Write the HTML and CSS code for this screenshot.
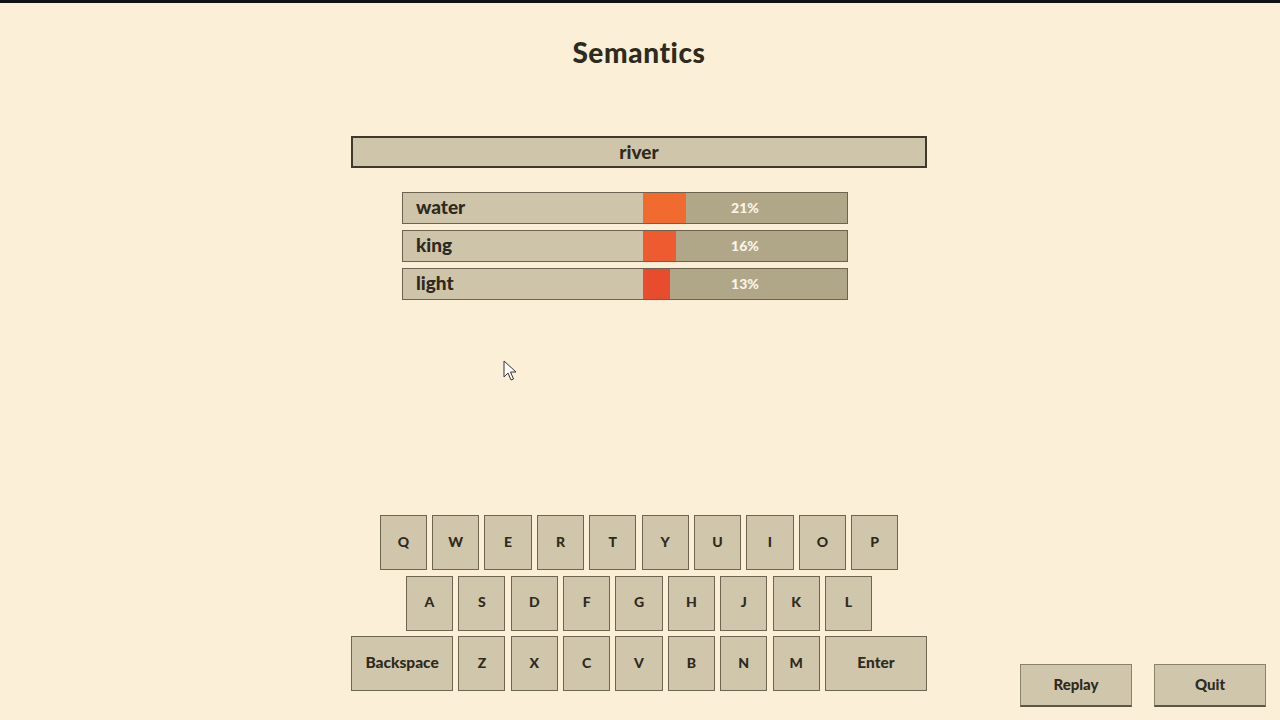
FILE: index.html
```html
<!DOCTYPE html>
<html lang="en">
<head>
    <meta charset="utf-8">
    <meta name="viewport" content="width=device-width, initial-scale=1.0">
    <title>Semantics</title>
    <link rel="stylesheet" href="styles.css">
</head>
<body>

<h1 class="title">Semantics</h1>

<div class="guess-box">river</div>

<div class="results">
    <div class="result-row">
        <div class="result-word">water</div>
        <div class="result-track">
            <div class="result-fill fill-high" style="width: 21%"></div>
            <div class="result-pct">21%</div>
        </div>
    </div>
    <div class="result-row">
        <div class="result-word">king</div>
        <div class="result-track">
            <div class="result-fill fill-mid" style="width: 16%"></div>
            <div class="result-pct">16%</div>
        </div>
    </div>
    <div class="result-row">
        <div class="result-word">light</div>
        <div class="result-track">
            <div class="result-fill fill-low" style="width: 13%"></div>
            <div class="result-pct">13%</div>
        </div>
    </div>
</div>

<div class="bottom">
    <div class="keyboard">
        <div class="key-row">
            <button class="key">Q</button>
            <button class="key">W</button>
            <button class="key">E</button>
            <button class="key">R</button>
            <button class="key">T</button>
            <button class="key">Y</button>
            <button class="key">U</button>
            <button class="key">I</button>
            <button class="key">O</button>
            <button class="key">P</button>
        </div>
        <div class="key-row">
            <button class="key">A</button>
            <button class="key">S</button>
            <button class="key">D</button>
            <button class="key">F</button>
            <button class="key">G</button>
            <button class="key">H</button>
            <button class="key">J</button>
            <button class="key">K</button>
            <button class="key">L</button>
        </div>
        <div class="key-row">
            <button class="key key-wide">Backspace</button>
            <button class="key">Z</button>
            <button class="key">X</button>
            <button class="key">C</button>
            <button class="key">V</button>
            <button class="key">B</button>
            <button class="key">N</button>
            <button class="key">M</button>
            <button class="key key-wide">Enter</button>
        </div>
    </div>
    <div class="actions">
        <button class="action">Replay</button>
        <button class="action">Quit</button>
    </div>
</div>

<!-- mouse pointer caught in the capture -->
<svg class="pointer" width="14" height="22" viewBox="0 0 14 22">
    <path d="M1 1 L1 17 L5 13 L8 20 L10.5 19 L7.5 12 L13 12 Z" fill="#fff" stroke="#333" stroke-width="1" stroke-linejoin="round"/>
</svg>

</body>
</html>
```

FILE: styles.css
```css
html, body {
    height: 100%;
}
body {
    margin: 0;
    box-sizing: border-box;
    border-top: 3px solid #111;
    background: #fbf0d7;
    color: #2e2a20;
    font-family: Lato, "Open Sans", sans-serif;
    font-weight: bold;
    display: flex;
    flex-direction: column;
    align-items: center;
    padding: 0 2px 13px 0;
    position: relative;
    overflow: hidden;
}
.title {
    margin: 32px 0 0;
    font-size: 28px;
    line-height: 34px;
    font-weight: 900;
    letter-spacing: 0.6px;
}
.guess-box {
    margin-top: 67px;
    width: 576px;
    height: 32px;
    box-sizing: border-box;
    border: 2px solid #3e392b;
    background: #cfc5aa;
    text-align: center;
    font-size: 19px;
    line-height: 27px;
    font-weight: 900;
}
.results {
    margin-top: 24px;
    margin-right: 28px;
    width: 446px;
    display: flex;
    flex-direction: column;
    gap: 6px;
}
.result-row {
    display: flex;
    height: 32px;
    box-sizing: border-box;
    border: 1px solid #6b6350;
}
.result-word {
    width: 240px;
    box-sizing: border-box;
    background: #cec4aa;
    padding-left: 13px;
    font-size: 19px;
    line-height: 28px;
    font-weight: 900;
}
.result-track {
    flex: 1;
    display: grid;
    background: #b0a688;
}
.result-fill,
.result-pct {
    grid-area: 1 / 1;
}
.result-fill {
    justify-self: start;
    height: 100%;
}
.fill-high { background: #f16a2f; }
.fill-mid { background: #ef5b30; }
.fill-low { background: #e84b2d; }
.result-pct {
    color: #fbf4e6;
    font-size: 14px;
    line-height: 30px;
    text-align: center;
    font-weight: 900;
}
.bottom {
    flex: 1;
    width: 100%;
    display: grid;
    grid-template-columns: 1fr auto 1fr;
    align-items: end;
}
.keyboard {
    grid-column: 2;
    margin-bottom: 16px;
    display: flex;
    flex-direction: column;
    align-items: center;
    gap: 5.5px;
}
.key-row {
    display: flex;
    gap: 5.2px;
}
.key {
    width: 47.2px;
    height: 55px;
    padding: 0 0 3px;
    border: 1px solid #6e6551;
    background: #cfc6ac;
    color: #2e2a20;
    font-family: inherit;
    font-weight: 900;
    font-size: 14px;
    cursor: pointer;
}
.key-wide {
    width: 102px;
    font-size: 15.5px;
}
.actions {
    grid-column: 3;
    justify-self: end;
    display: flex;
    gap: 22px;
    padding-right: 12px;
}
.action {
    width: 112px;
    height: 43px;
    padding: 0 0 2px;
    border: 1px solid #8b826a;
    border-bottom: 2px solid #5e5644;
    background: #cfc6ac;
    color: #2e2a20;
    font-family: inherit;
    font-weight: 900;
    font-size: 15px;
    cursor: pointer;
}
.pointer {
    position: absolute;
    left: 503px;
    top: 357px;
}
```
